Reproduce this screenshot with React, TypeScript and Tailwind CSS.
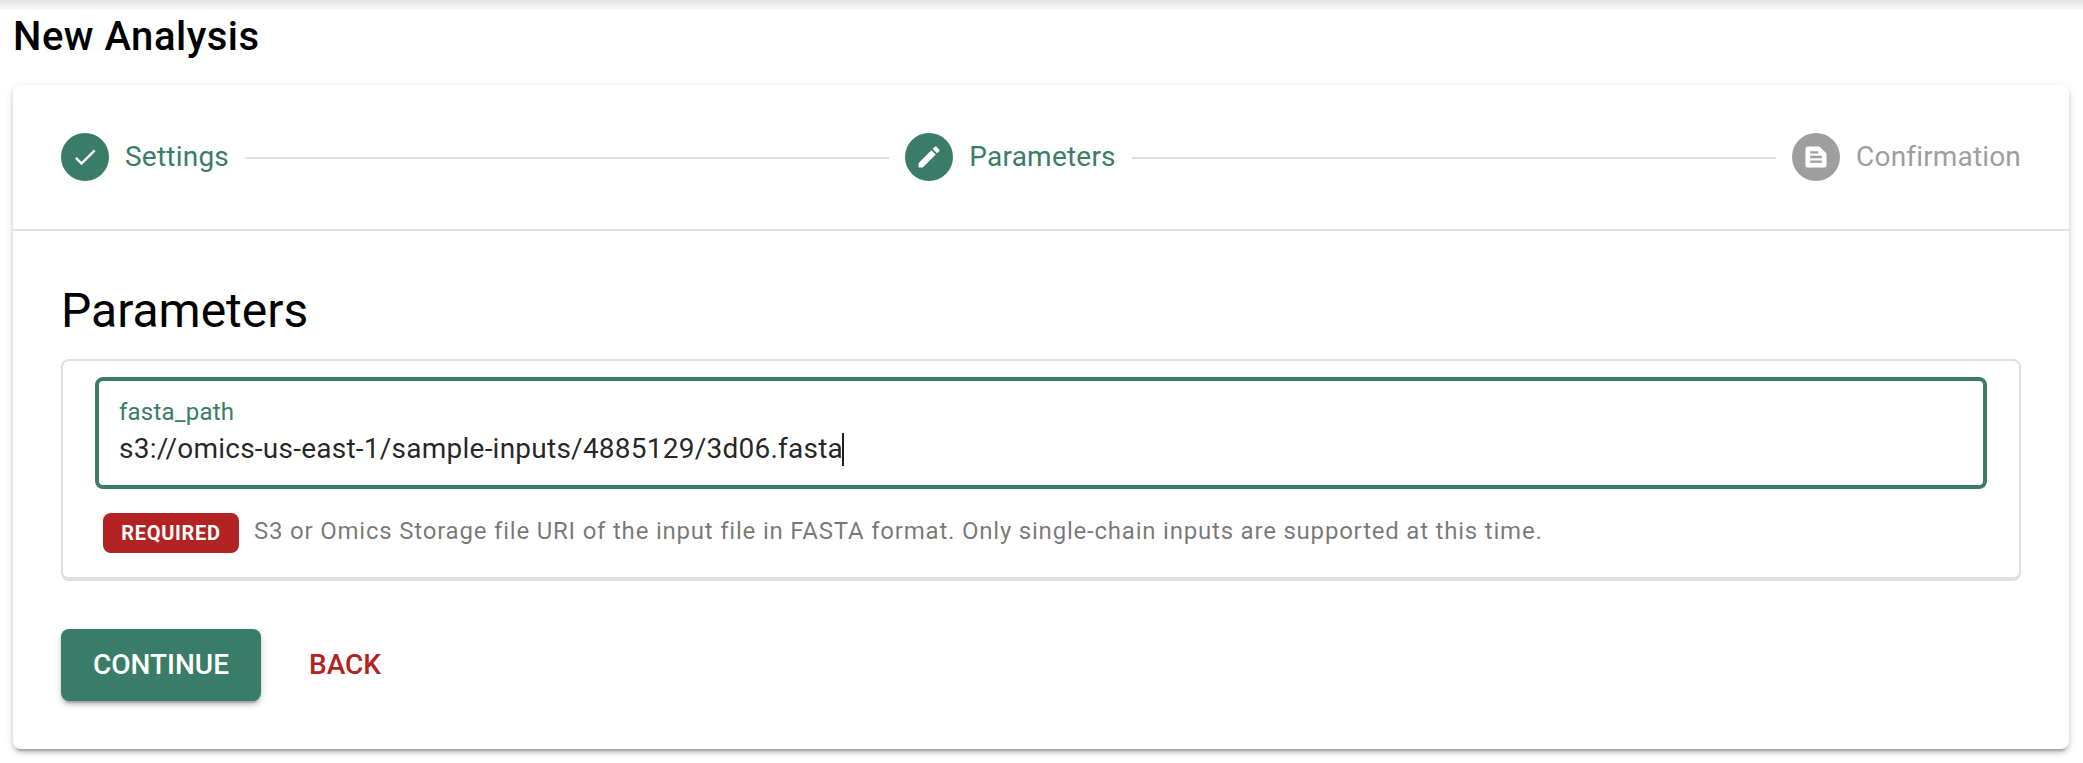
import React from "react";

const GRAY_LINE = "h-0.5 flex-1 bg-[#e0e0e0] mt-0.5";

function StepIcon({ path, muted }: { path: string; muted?: boolean }) {
  return (
    <span
      className={
        "flex size-12 shrink-0 items-center justify-center rounded-full " +
        (muted ? "bg-[#9e9e9e]" : "bg-[#397d69]")
      }
    >
      <svg viewBox="0 0 24 24" className="size-7 fill-white">
        <path d={path} />
      </svg>
    </span>
  );
}

function Step({ label, path, muted }: { label: string; path: string; muted?: boolean }) {
  return (
    <div className="flex items-center gap-4">
      <StepIcon path={path} muted={muted} />
      <span
        className={
          "text-[28px] leading-7 " +
          (muted ? "tracking-[0.17px] text-[#9e9e9e]" : "tracking-[0.22px] text-[#397d69]")
        }
      >
        {label}
      </span>
    </div>
  );
}

const CHECK = "M21 7L9 19l-5.5-5.5 1.41-1.41L9 16.17 19.59 5.59 21 7z";
const PENCIL =
  "M3 17.46v3.04c0 .28.22.5.5.5h3.04c.13 0 .26-.05.35-.15L17.81 9.94l-3.75-3.75L3.15 17.1c-.1.1-.15.22-.15.36zM20.71 7.04a.996.996 0 0 0 0-1.41l-2.34-2.34a.996.996 0 0 0-1.41 0l-1.83 1.83 3.75 3.75 1.83-1.83z";
const SNIPPET =
  "M20.41 8.41l-4.83-4.83c-.37-.37-.88-.58-1.41-.58H5c-1.1 0-2 .9-2 2v14c0 1.1.9 2 2 2h14c1.1 0 2-.9 2-2V9.83c0-.53-.21-1.04-.59-1.42zM7 7h7v2H7V7zm10 10H7v-2h10v2zm0-4H7v-2h10v2z";

export default function App() {
  return (
    <div className="flex h-[763px] w-full flex-col overflow-hidden bg-white font-['Roboto',sans-serif] text-black">
      <div className="h-2.5 shrink-0 bg-linear-to-b from-[#e4e4e4] to-[#fafafa]" />
      <h1 className="mt-[7px] ml-[13px] h-[68px] text-[40px] leading-10 font-medium tracking-[0.5px]">
        New Analysis
      </h1>
      <main className="mr-3.5 ml-[13px] h-[664px] rounded-lg bg-white shadow-[0_6px_2px_-4px_rgba(0,0,0,0.2),0_4px_4px_0_rgba(0,0,0,0.14),0_2px_10px_0_rgba(0,0,0,0.12)]">
        <div className="flex h-[146px] items-center gap-4 border-b-2 border-[#e0e0e0] px-12">
          <Step label="Settings" path={CHECK} />
          <div className={GRAY_LINE} />
          <Step label="Parameters" path={PENCIL} />
          <div className={GRAY_LINE} />
          <Step label="Confirmation" path={SNIPPET} muted />
        </div>
        <div className="px-12 pt-12">
          <h2 className="h-20 text-[48px] leading-16">Parameters</h2>
          <section className="h-[222px] rounded-lg border-2 border-b-4 border-[#e0e0e0] px-8 pt-4">
            <div className="h-28 rounded-lg border-4 border-[#397d69] px-5 pt-[17px]">
              <label className="block h-7 text-[24px] leading-7 tracking-[0.2px] text-[#397d69]">
                fasta_path
              </label>
              <div className="mt-[3px] flex h-10 items-center text-[28px] leading-10 tracking-[0.24px] text-black/87">
                s3://omics-us-east-1/sample-inputs/4885129/3d06.fasta
                <span className="-ml-px h-[33px] w-0.5 bg-[#212121]" />
              </div>
            </div>
            <div className="mt-6 ml-2 flex items-start gap-[15px]">
              <span className="flex h-10 w-[136px] items-center justify-center rounded-lg bg-[#b22222] text-[20px] leading-5 font-bold tracking-[0.67px] text-white">
                REQUIRED
              </span>
              <span className="text-[24px] leading-9 tracking-[0.79px] text-black/54">
                S3 or Omics Storage file URI of the input file in FASTA format. Only single-chain
                inputs are supported at this time.
              </span>
            </div>
          </section>
          <div className="mt-12 flex gap-4">
            <button className="h-[72px] w-[200px] rounded-lg bg-[#397d69] text-[28px] font-medium text-white shadow-[0_6px_2px_-4px_rgba(0,0,0,0.2),0_4px_4px_0_rgba(0,0,0,0.14),0_2px_10px_0_rgba(0,0,0,0.12)]">
              CONTINUE
            </button>
            <button className="h-[72px] px-8 text-[28px] font-medium text-[#b22222]">BACK</button>
          </div>
        </div>
      </main>
    </div>
  );
}
